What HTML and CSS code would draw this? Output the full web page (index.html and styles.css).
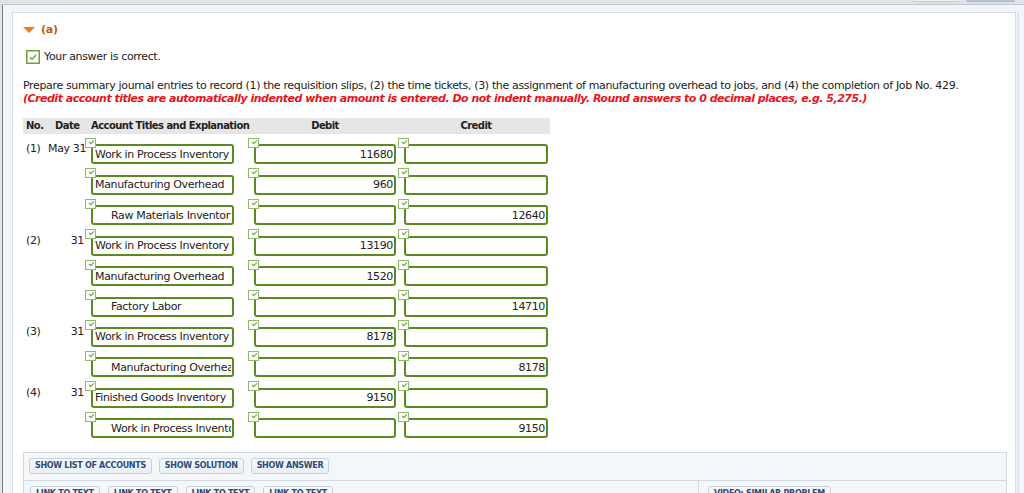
FILE: index.html
```html
<!DOCTYPE html>
<html lang="en">
<head>
<meta charset="utf-8">
<title>Journal entries</title>
<link rel="stylesheet" href="styles.css">
</head>
<body>
<div class="topbar"><span class="tab"></span><span class="tab tab-active"></span></div>
<div class="frame">
  <div class="panel">
    <div class="part-head"><span class="tri"></span><span class="part-label">(a)</span></div>

    <div class="result">
      <span class="check-lg"><svg width="14" height="14" viewBox="0 0 14 14"><rect x="0.75" y="0.75" width="12.5" height="12.5" fill="#fff" stroke="#6f9d43" stroke-width="1.5"/><path d="M3.8 7.2 L6 9.4 L10.2 4.8" fill="none" stroke="#5ea12f" stroke-width="1.3"/></svg></span>
      <span>Your answer is correct.</span>
    </div>

    <p class="question">Prepare summary journal entries to record (1) the requisition slips, (2) the time tickets, (3) the assignment of manufacturing overhead to jobs, and (4) the completion of Job No. 429.<br><em class="note">(Credit account titles are automatically indented when amount is entered. Do not indent manually. Round answers to 0 decimal places, e.g. 5,275.)</em></p>

    <div class="journal">
      <div class="jhead">
        <span class="h-no">No.</span>
        <span class="h-date">Date</span>
        <span class="h-acct">Account Titles and Explanation</span>
        <span class="h-debit">Debit</span>
        <span class="h-credit">Credit</span>
      </div>

      <div class="jrow">
        <span class="c-no">(1)</span><span class="c-date">May 31</span>
        <div class="field"><span class="mini"></span><input class="in in-acct" readonly value="Work in Process Inventory"></div>
        <div class="field"><span class="mini"></span><input class="in in-debit" readonly value="11680"></div>
        <div class="field"><span class="mini"></span><input class="in in-credit" readonly value=""></div>
      </div>
      <div class="jrow">
        <span class="c-no"></span><span class="c-date"></span>
        <div class="field"><span class="mini"></span><input class="in in-acct" readonly value="Manufacturing Overhead"></div>
        <div class="field"><span class="mini"></span><input class="in in-debit" readonly value="960"></div>
        <div class="field"><span class="mini"></span><input class="in in-credit" readonly value=""></div>
      </div>
      <div class="jrow">
        <span class="c-no"></span><span class="c-date"></span>
        <div class="field"><span class="mini"></span><input class="in in-acct indent" readonly value="Raw Materials Inventory"></div>
        <div class="field"><span class="mini"></span><input class="in in-debit" readonly value=""></div>
        <div class="field"><span class="mini"></span><input class="in in-credit" readonly value="12640"></div>
      </div>

      <div class="jrow">
        <span class="c-no">(2)</span><span class="c-date">31</span>
        <div class="field"><span class="mini"></span><input class="in in-acct" readonly value="Work in Process Inventory"></div>
        <div class="field"><span class="mini"></span><input class="in in-debit" readonly value="13190"></div>
        <div class="field"><span class="mini"></span><input class="in in-credit" readonly value=""></div>
      </div>
      <div class="jrow">
        <span class="c-no"></span><span class="c-date"></span>
        <div class="field"><span class="mini"></span><input class="in in-acct" readonly value="Manufacturing Overhead"></div>
        <div class="field"><span class="mini"></span><input class="in in-debit" readonly value="1520"></div>
        <div class="field"><span class="mini"></span><input class="in in-credit" readonly value=""></div>
      </div>
      <div class="jrow">
        <span class="c-no"></span><span class="c-date"></span>
        <div class="field"><span class="mini"></span><input class="in in-acct indent" readonly value="Factory Labor"></div>
        <div class="field"><span class="mini"></span><input class="in in-debit" readonly value=""></div>
        <div class="field"><span class="mini"></span><input class="in in-credit" readonly value="14710"></div>
      </div>

      <div class="jrow">
        <span class="c-no">(3)</span><span class="c-date">31</span>
        <div class="field"><span class="mini"></span><input class="in in-acct" readonly value="Work in Process Inventory"></div>
        <div class="field"><span class="mini"></span><input class="in in-debit" readonly value="8178"></div>
        <div class="field"><span class="mini"></span><input class="in in-credit" readonly value=""></div>
      </div>
      <div class="jrow">
        <span class="c-no"></span><span class="c-date"></span>
        <div class="field"><span class="mini"></span><input class="in in-acct indent" readonly value="Manufacturing Overhead"></div>
        <div class="field"><span class="mini"></span><input class="in in-debit" readonly value=""></div>
        <div class="field"><span class="mini"></span><input class="in in-credit" readonly value="8178"></div>
      </div>

      <div class="jrow">
        <span class="c-no">(4)</span><span class="c-date">31</span>
        <div class="field"><span class="mini"></span><input class="in in-acct" readonly value="Finished Goods Inventory"></div>
        <div class="field"><span class="mini"></span><input class="in in-debit" readonly value="9150"></div>
        <div class="field"><span class="mini"></span><input class="in in-credit" readonly value=""></div>
      </div>
      <div class="jrow">
        <span class="c-no"></span><span class="c-date"></span>
        <div class="field"><span class="mini"></span><input class="in in-acct indent" readonly value="Work in Process Inventory"></div>
        <div class="field"><span class="mini"></span><input class="in in-debit" readonly value=""></div>
        <div class="field"><span class="mini"></span><input class="in in-credit" readonly value="9150"></div>
      </div>
    </div>

    <div class="tools">
      <div class="tools-row">
        <button class="btn">SHOW LIST OF ACCOUNTS</button>
        <button class="btn">SHOW SOLUTION</button>
        <button class="btn">SHOW ANSWER</button>
      </div>
      <div class="tools-row2">
        <div class="links">
          <button class="btn">LINK TO TEXT</button>
          <button class="btn">LINK TO TEXT</button>
          <button class="btn">LINK TO TEXT</button>
          <button class="btn">LINK TO TEXT</button>
        </div>
        <div class="extras">
          <button class="btn">VIDEO: SIMILAR PROBLEM</button>
        </div>
      </div>
    </div>
  </div>
</div>
</body>
</html>
```

FILE: styles.css
```css
html, body {
  margin: 0;
  padding: 0;
}
body {
  background: #e4e6ea;
  font-family: "DejaVu Sans", Verdana, sans-serif;
  font-size: 11px;
  letter-spacing: -0.35px;
  color: #222;
  height: 493px;
  overflow: hidden;
}

.topbar {
  height: 4px;
  background: #dfe2e7;
  border-bottom: 1px solid #c3c7cf;
  display: flex;
  justify-content: flex-end;
  align-items: flex-start;
  gap: 6px;
  padding-right: 9px;
}
.tab {
  width: 46px;
  height: 1px;
  background: #f1f3f6;
  border: 1px solid #c9cdd4;
  border-top: none;
  border-radius: 0 0 3px 3px;
}
.tab-active {
  width: 47px;
  background: #b9c6d6;
  border-color: #aab6c6;
}

.frame {
  margin-left: 2px;
  border-left: 1px solid #7c7c7c;
  background: #f1f4f8;
  padding: 7px 0 0 9px;
  height: 600px;
}

.panel {
  width: 1004px;
  background: #fff;
  border: 1px solid #d9dde3;
  padding: 10px 8px 0 10px;
  box-sizing: border-box;
  height: 600px;
  box-shadow: 1px 0 0 #f1f4f8, 3px 0 0 #dfe5ec;
}

.part-head {
  display: flex;
  align-items: center;
  gap: 6px;
  height: 13px;
  line-height: 13px;
}
.tri {
  width: 0;
  height: 0;
  border-left: 6px solid transparent;
  border-right: 6px solid transparent;
  border-top: 6px solid #f27a1e;
}
.part-label {
  font-weight: bold;
  color: #c4591c;
  letter-spacing: -0.2px;
}

.result {
  display: flex;
  align-items: center;
  gap: 4px;
  margin: 14px 0 0 3px;
  height: 14px;
  line-height: 14px;
}
.check-lg {
  display: block;
  width: 14px;
  height: 14px;
}
.check-lg svg { display: block; }

.question {
  margin: 14.5px 0 0 0;
  line-height: 13.3px;
  white-space: nowrap;
}
.note {
  color: #e8141c;
  font-weight: bold;
  font-style: italic;
  letter-spacing: -0.5px;
}

.journal {
  margin-top: 12.8px;
  width: 527px;
}
.jhead {
  display: grid;
  grid-template-columns: 25px 37px 163px 150px 152px;
  height: 16px;
  line-height: 16px;
  background: #e6e6e6;
  font-weight: bold;
  font-size: 10px;
  letter-spacing: -0.55px;
}
.h-no { padding-left: 3px; }
.h-date { padding-left: 7px; }
.h-acct { padding-left: 6px; white-space: nowrap; }
.h-debit { padding-left: 6px; width: 142px; text-align: center; }
.h-credit { padding-left: 6px; width: 144px; text-align: center; }

.jrow {
  display: grid;
  grid-template-columns: 25px 37px 163px 150px 152px;
  height: 26px;
  margin-top: 4.44px;
}
.c-no {
  padding: 4px 0 0 3px;
  line-height: 13px;
}
.c-date {
  padding: 4px 1px 0 0;
  line-height: 13px;
  text-align: right;
  white-space: nowrap;
}

.field {
  position: relative;
  padding: 6px 0 0 6px;
}
.mini {
  position: absolute;
  left: 0;
  top: -0.5px;
  width: 11px;
  height: 10px;
  box-sizing: border-box;
  border: 1px solid #8fb96b;
  background: #fff;
  z-index: 1;
}
.mini::after {
  content: "";
  position: absolute;
  left: 2.5px;
  top: 1px;
  width: 4px;
  height: 2px;
  border-left: 1.2px solid #5fa02f;
  border-bottom: 1.2px solid #5fa02f;
  transform: rotate(-45deg);
}

.in {
  display: block;
  box-sizing: border-box;
  height: 20px;
  margin: 0;
  border: 2px solid #5b8b20;
  border-radius: 3px;
  background: #fff;
  font-family: "DejaVu Sans", Verdana, sans-serif;
  font-size: 11px;
  letter-spacing: -0.35px;
  color: #222;
  padding: 0 1px 0 2px;
  outline: none;
}
.in-acct { width: 143px; }
.in-debit { width: 142px; text-align: right; }
.in-credit { width: 144px; text-align: right; }
.indent { padding-left: 18px; }

.tools {
  margin-top: 13.6px;
  border: 1px solid #d3d9e1;
  background: #f4f7fa;
}
.tools-row {
  display: flex;
  gap: 7px;
  padding: 5px 5px 6px;
  border-bottom: 1px solid #d3d9e1;
}
.tools-row2 {
  display: grid;
  grid-template-columns: 675px 1fr;
  height: 40px;
}
.links {
  display: flex;
  gap: 8px;
  padding: 5px 6px;
  border-right: 1px solid #d3d9e1;
}
.extras {
  padding: 5px 9px;
}
.btn {
  height: 16px;
  margin: 0;
  padding: 0 5px;
  border: 1px solid #c8d0da;
  border-radius: 3px;
  background: linear-gradient(#f8fafc, #e9eef4);
  font-family: "DejaVu Sans", Verdana, sans-serif;
  font-size: 8px;
  font-weight: bold;
  letter-spacing: -0.3px;
  color: #2c4b7a;
  line-height: 14px;
  white-space: nowrap;
}
```
